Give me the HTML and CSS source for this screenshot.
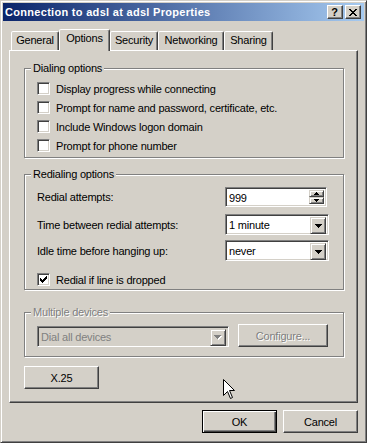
FILE: index.html
```html
<!DOCTYPE html>
<html lang="en">
<head>
  <meta charset="UTF-8" />
  <title>Connection to adsl at adsl Properties</title>
  <link rel="stylesheet" href="styles.css">
</head>
<body>
  <div class="window">
    <header class="titlebar">
      <span class="title">Connection to adsl at adsl Properties</span>
      <div class="caption-btns">
        <span class="cap-btn help">?</span>
        <span class="cap-btn close">
          <svg width="8" height="7" viewBox="0 0 8 7"><path d="M0 0h2v1H0zM6 0h2v1H6zM1 1h2v1H1zM5 1h2v1H5zM2 2h4v1H2zM3 3h2v1H3zM2 4h4v1H2zM1 5h2v1H1zM5 5h2v1H5zM0 6h2v1H0zM6 6h2v1H6z"/></svg>
        </span>
      </div>
    </header>

    <div class="dialog">
      <nav class="tabs">
        <div class="tab tab-general">General</div>
        <div class="tab tab-options active">Options</div>
        <div class="tab tab-security">Security</div>
        <div class="tab tab-networking">Networking</div>
        <div class="tab tab-sharing">Sharing</div>
      </nav>

      <main class="panel">
        <section class="group dialing">
          <div class="group-title">Dialing options</div>
          <div class="check-list">
            <label class="check-row"><span class="checkbox"></span>Display progress while connecting</label>
            <label class="check-row"><span class="checkbox"></span>Prompt for name and password, certificate, etc.</label>
            <label class="check-row"><span class="checkbox"></span>Include Windows logon domain</label>
            <label class="check-row"><span class="checkbox"></span>Prompt for phone number</label>
          </div>
        </section>

        <section class="group redialing">
          <div class="group-title">Redialing options</div>
          <div class="field-row row-attempts">
            <span class="field-label">Redial attempts:</span>
            <div class="spin">
              <span class="spin-value">999</span>
              <div class="spin-btns">
                <span class="spin-btn"><svg width="5" height="3" viewBox="0 0 5 3"><path d="M2 0h1v1H2zM1 1h3v1H1zM0 2h5v1H0z"/></svg></span>
                <span class="spin-btn"><svg width="5" height="3" viewBox="0 0 5 3"><path d="M0 0h5v1H0zM1 1h3v1H1zM2 2h1v1H2z"/></svg></span>
              </div>
            </div>
          </div>
          <div class="field-row row-between">
            <span class="field-label">Time between redial attempts:</span>
            <div class="combo">
              <span class="combo-value">1 minute</span>
              <span class="combo-arrow"><svg width="7" height="4" viewBox="0 0 7 4"><path d="M0 0h7v1H0zM1 1h5v1H1zM2 2h3v1H2zM3 3h1v1H3z"/></svg></span>
            </div>
          </div>
          <div class="field-row row-idle">
            <span class="field-label">Idle time before hanging up:</span>
            <div class="combo">
              <span class="combo-value">never</span>
              <span class="combo-arrow"><svg width="7" height="4" viewBox="0 0 7 4"><path d="M0 0h7v1H0zM1 1h5v1H1zM2 2h3v1H2zM3 3h1v1H3z"/></svg></span>
            </div>
          </div>
          <label class="check-row row-redial">
            <span class="checkbox">
              <svg width="7" height="7" viewBox="0 0 7 7"><path d="M6 0h1v1H6zM5 1h2v1H5zM0 2h1v1H0zM4 2h3v1H4zM0 3h2v1H0zM3 3h3v1H3zM0 4h5v1H0zM1 5h3v1H1zM2 6h1v1H2z"/></svg>
            </span>Redial if line is dropped
          </label>
        </section>

        <section class="group multiple disabled">
          <div class="group-title">Multiple devices</div>
          <div class="device-row">
            <div class="combo combo-devices">
              <span class="combo-value">Dial all devices</span>
              <span class="combo-arrow">
                <svg width="8" height="5" viewBox="0 0 8 5"><path fill="#fff" d="M1 1h7v1H1zM2 2h5v1H2zM3 3h3v1H3zM4 4h1v1H4z"/><path fill="#808080" d="M0 0h7v1H0zM1 1h5v1H1zM2 2h3v1H2zM3 3h1v1H3z"/></svg>
              </span>
            </div>
            <button class="btn btn-configure" disabled>Configure...</button>
          </div>
        </section>

        <button class="btn btn-x25">X.25</button>
      </main>

      <footer class="actions">
        <button class="btn default">OK</button>
        <button class="btn">Cancel</button>
      </footer>
    </div>

    <svg class="cursor" width="13" height="21" viewBox="0 0 13 21">
      <path d="M0.5 0.5V16.5L4.5 12.5L7.5 19.5L9.5 18.5L6.5 11.5H11.5Z" fill="#fff" stroke="#000" stroke-width="1" stroke-linejoin="miter"/>
    </svg>
  </div>
</body>
</html>
```

FILE: styles.css
```css
*,*::before,*::after{box-sizing:border-box;margin:0;padding:0;}
body{
  font-family:"Liberation Sans",Arial,sans-serif;
  font-size:11px;
  letter-spacing:-0.2px;
  color:#000;
  background:#d4d0c8;
}
.window{
  position:relative;
  width:367px;height:443px;
  background:#d4d0c8;
  border:1px solid;
  border-color:#d4d0c8 #404040 #404040 #d4d0c8;
  box-shadow:inset 1px 1px #fff,inset -1px -1px #808080;
  padding:2px;
}

/* title bar */
.titlebar{
  height:18px;
  display:flex;align-items:center;
  padding:0 3px 0 2px;
  background:linear-gradient(to right,#0a246a,#a6caf0);
}
.title{flex:1;color:#fff;font-weight:bold;letter-spacing:0.3px;line-height:18px;white-space:nowrap;}
.caption-btns{display:flex;gap:2px;}
.cap-btn{
  width:16px;height:14px;
  display:flex;align-items:center;justify-content:center;
  background:#d4d0c8;
  border:1px solid;
  border-color:#fff #404040 #404040 #fff;
  box-shadow:inset -1px -1px #808080;
}
.cap-btn.help{font-weight:bold;font-size:11px;line-height:12px;padding-right:1px;}
.cap-btn.close svg{display:block;margin-left:-1px;}

/* dialog body */
.dialog{padding:8px 6px 0;}
.tabs{display:flex;align-items:flex-end;height:21px;padding-left:2px;}
.tab{
  height:19px;
  padding-top:2px;
  text-align:center;line-height:13px;white-space:nowrap;
  border:1px solid;border-bottom:0;
  border-color:#fff #404040 transparent #fff;
  border-radius:2px 2px 0 0;
  box-shadow:inset -1px 0 #808080;
  background:#d4d0c8;
}
.tab.active{height:22px;margin-bottom:-1px;position:relative;z-index:1;}
.tab-general{width:48px;}
.tab-options{width:51px;}
.tab-security{width:48px;}
.tab-networking{width:66px;}
.tab-sharing{width:49px;}

.panel{
  height:353px;
  border:1px solid;
  border-color:#fff #404040 #404040 #fff;
  box-shadow:inset -1px -1px #808080;
  padding:17px 13px 0 14px;
}

/* group boxes */
.group{
  border:1px solid #808080;
  box-shadow:inset 1px 1px #fff,1px 1px #fff;
  padding:0 12px;
}
.group-title{
  width:fit-content;
  margin:-7px 0 0 -6px;
  padding:0 2px;
  line-height:13px;
  background:#d4d0c8;
}
.dialing{height:90px;}
.redialing{height:116px;margin-top:16px;}
.multiple{height:45px;margin-top:22px;}
.disabled .group-title{color:#808080;text-shadow:1px 1px #fff;}

.check-list{padding-top:4px;}
.check-row{display:flex;align-items:center;gap:6px;height:19px;white-space:nowrap;}
.checkbox{
  width:13px;height:13px;flex:none;
  display:flex;align-items:center;justify-content:center;
  background:#fff;
  border:1px solid;
  border-color:#808080 #fff #fff #808080;
  box-shadow:inset 1px 1px #404040,inset -1px -1px #d4d0c8;
}
.checkbox svg{display:block;}

.field-row{display:flex;align-items:center;}
.field-label{width:188px;flex:none;}
.row-attempts{margin-top:6px;}
.row-between{margin-top:7px;}
.row-idle{margin-top:5px;}
.row-redial{margin-top:9px;}

/* sunken fields */
.spin,.combo{
  display:flex;
  background:#fff;
  border:1px solid;
  border-color:#808080 #fff #fff #808080;
  box-shadow:inset 1px 1px #404040,inset -1px -1px #d4d0c8;
  padding:2px;
}
.spin{width:102px;height:20px;}
.combo{width:104px;height:21px;}
.spin-value,.combo-value{flex:1;padding-left:1px;line-height:16px;white-space:nowrap;}
.spin-btns{display:flex;flex-direction:column;width:15px;}
.spin-btn,.combo-arrow{
  display:flex;align-items:center;justify-content:center;
  background:#d4d0c8;
  border:1px solid;
  border-color:#d4d0c8 #404040 #404040 #d4d0c8;
  box-shadow:inset 1px 1px #fff,inset -1px -1px #808080;
}
.spin-btn{flex:1;}
.combo-arrow{width:16px;height:17px;}
.spin svg,.combo svg{display:block;}

.device-row{display:flex;align-items:flex-end;gap:9px;margin-top:5px;}
.combo-devices{width:192px;background:#d4d0c8;}
.combo-devices .combo-value{color:#808080;}

/* buttons */
.btn{
  width:75px;height:23px;
  display:flex;align-items:center;justify-content:center;
  font:inherit;letter-spacing:inherit;color:#000;
  background:#d4d0c8;
  border:1px solid;
  border-color:#fff #404040 #404040 #fff;
  box-shadow:inset -1px -1px #808080;
}
.btn.default{
  border-color:#000;
  box-shadow:inset 1px 1px #fff,inset -1px -1px #404040,inset -2px -2px #808080;
}
.btn:disabled{color:#808080;text-shadow:1px 1px #fff;}
.btn-configure{width:90px;}
.btn-x25{margin-top:9px;}

.actions{display:flex;justify-content:flex-end;gap:6px;margin-top:7px;}

.cursor{position:absolute;left:222px;top:378px;}
```
